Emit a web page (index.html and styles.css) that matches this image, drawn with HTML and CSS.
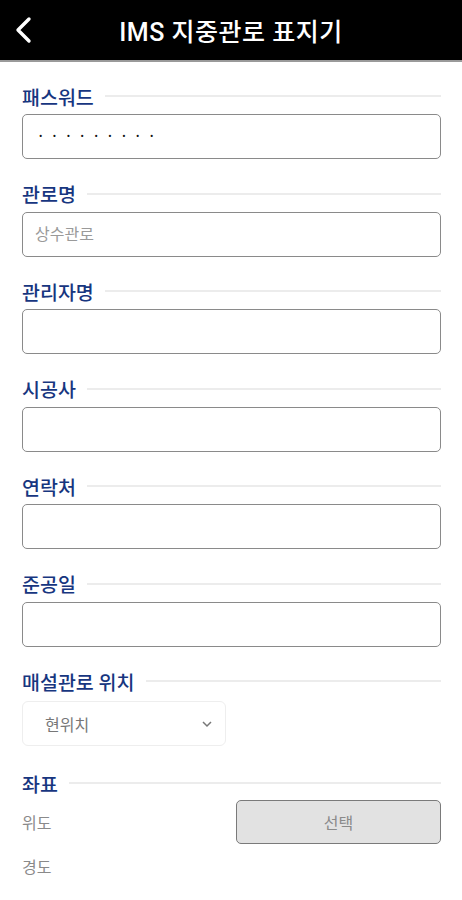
FILE: index.html
```html
<!DOCTYPE html>
<html lang="ko">
<head>
    <meta charset="UTF-8">
    <link rel="stylesheet" href="styles.css">
</head>
<body>
    <header class="topbar">
        <svg class="back" width="24" height="30" viewBox="0 0 24 30">
            <polyline points="17,4 6,15 17,26" fill="none" stroke="#fff" stroke-width="3.4" stroke-linecap="round" stroke-linejoin="round"/>
        </svg>
        <h1 class="title">IMS 지중관로 표지기</h1>
    </header>

    <main class="form">
        <div class="field">
            <div class="label-row"><span class="label">패스워드</span><span class="rule"></span></div>
            <input class="box pw" type="password" value="123456789">
        </div>
        <div class="field">
            <div class="label-row"><span class="label">관로명</span><span class="rule"></span></div>
            <input class="box" type="text" placeholder="상수관로">
        </div>
        <div class="field">
            <div class="label-row"><span class="label">관리자명</span><span class="rule"></span></div>
            <input class="box" type="text">
        </div>
        <div class="field">
            <div class="label-row"><span class="label">시공사</span><span class="rule"></span></div>
            <input class="box" type="text">
        </div>
        <div class="field">
            <div class="label-row"><span class="label">연락처</span><span class="rule"></span></div>
            <input class="box" type="text">
        </div>
        <div class="field">
            <div class="label-row"><span class="label">준공일</span><span class="rule"></span></div>
            <input class="box" type="text">
        </div>
        <div class="field location">
            <div class="label-row"><span class="label">매설관로 위치</span><span class="rule"></span></div>
            <div class="select">
                <span>현위치</span>
                <svg width="12" height="8" viewBox="0 0 12 8">
                    <polyline points="2,2 6,6 10,2" fill="none" stroke="#777" stroke-width="1.5"/>
                </svg>
            </div>
        </div>
        <div class="field coords">
            <div class="label-row"><span class="label">좌표</span><span class="rule"></span></div>
            <div class="coord-grid">
                <span class="coord-name">위도</span>
                <button class="pick">선택</button>
                <span class="coord-name">경도</span>
            </div>
        </div>
    </main>
</body>
</html>
```

FILE: styles.css
```css
* {
    margin: 0;
    padding: 0;
    box-sizing: border-box;
    font-family: Roboto, "Noto Sans CJK KR", sans-serif;
}

body {
    width: 462px;
    min-height: 900px;
    background: #fff;
}

.topbar {
    height: 62px;
    background: #000;
    border-bottom: 2px solid #9a9a9a;
    display: flex;
    align-items: center;
    justify-content: center;
    position: relative;
}

.back {
    position: absolute;
    left: 12px;
    top: 15px;
}

.title {
    color: #fff;
    font-size: 25px;
    font-weight: 500;
    letter-spacing: 0.5px;
}

.form {
    padding: 22px 21px 0 22px;
}

.field {
    margin-bottom: 22.5px;
}

.label-row {
    display: flex;
    align-items: center;
    gap: 11px;
    height: 24px;
    margin-bottom: 6px;
}

.label {
    color: #17367f;
    font-size: 19.5px;
    font-weight: 500;
    white-space: nowrap;
}

.rule {
    flex: 1;
    height: 2px;
    background: #ececec;
}

.box {
    display: block;
    width: 100%;
    height: 45px;
    border: 1.5px solid #8a8a8a;
    border-radius: 5px;
    background: #fff;
    padding: 0 12px;
    font-size: 16px;
    color: #222;
    outline: none;
}

.box::placeholder {
    color: #9a9a9a;
}

.pw {
    padding-left: 16px;
    font-size: 10px;
    letter-spacing: 10.5px;
    color: #111;
}

.location .label-row {
    margin-bottom: 8px;
}

.location {
    margin-bottom: 25px;
}

.select {
    width: 204px;
    height: 45px;
    border: 1px solid #eeeeee;
    border-radius: 6px;
    display: flex;
    align-items: center;
    justify-content: space-between;
    padding: 0 12px 0 22px;
    color: #777;
    font-size: 16px;
}

.coords .label-row {
    margin-bottom: 5px;
}

.coord-grid {
    display: grid;
    grid-template-columns: 1fr 205px;
    grid-template-rows: 44px 44px;
    align-items: center;
}

.coord-name {
    color: #8a8a8a;
    font-size: 16px;
}

.pick {
    height: 44px;
    background: #e2e2e2;
    border: 1.5px solid #7a7a7a;
    border-radius: 5px;
    color: #8a8a8a;
    font-size: 16px;
}
```
